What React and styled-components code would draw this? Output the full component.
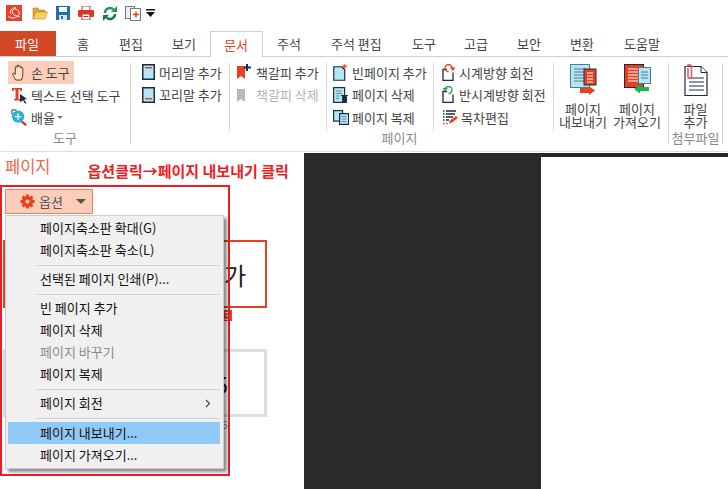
import styled, { createGlobalStyle } from "styled-components";

const GlobalStyle = createGlobalStyle`
  html, body {
    margin: 0;
    padding: 0;
    background: #fff;
    overflow: hidden;
  }
  * {
    box-sizing: border-box;
  }
  body {
    font-family: "Noto Sans CJK KR", "Noto Sans", sans-serif;
    font-size: 13px;
    color: #333;
  }
`;

const NAVY = "#1c2a45";
const SKY = "#b5e6f6";
const RED = "#e8401f";

const Window = styled.div`
  width: 728px;
  height: 489px;
  overflow: hidden;
  display: flex;
  flex-direction: column;
  background: #fff;
`;

const QuickBar = styled.div`
  height: 31px;
  display: flex;
  align-items: center;
  padding: 0 0 5px 6px;
`;

const QuickSlot = styled.div`
  width: ${(p) => p.$w}px;
  display: flex;
  align-items: center;
`;

const TabRow = styled.div`
  height: 26px;
  display: flex;
  border-bottom: 1px solid #cfcfcf;
`;

const Tab = styled.div`
  width: ${(p) => p.$w}px;
  height: 25px;
  padding-left: ${(p) => p.$pad}px;
  line-height: 25px;
  color: #444;
  white-space: nowrap;
`;

const FileTab = styled(Tab)`
  background: #d24726;
  color: #fff;
  padding-left: 15px;
`;

const ActiveTab = styled(Tab)`
  height: 26px;
  color: ${RED};
  background: #fff;
  border: 1px solid #cfcfcf;
  border-bottom: 0;
  padding-left: 13px;
`;

const Ribbon = styled.div`
  height: 95px;
  display: flex;
  padding-top: 6px;
  border-bottom: 1px solid #ddd;
`;

const Group = styled.div`
  width: ${(p) => p.$w}px;
  height: 81px;
  border-right: 1px solid #d8d8d8;
  display: flex;
  flex-direction: column;
`;

const GroupBody = styled.div`
  height: 68px;
  display: flex;
`;

const GroupLabel = styled.div`
  height: 13px;
  line-height: 13px;
  text-align: center;
  color: #888;
  white-space: nowrap;
`;

const Column = styled.div`
  width: ${(p) => p.$w}px;
  height: 68px;
  padding-left: ${(p) => p.$pad}px;
  border-right: ${(p) => (p.$open ? "0" : "1px solid #d8d8d8")};
  display: flex;
  flex-direction: column;
`;

const ToolRow = styled.div`
  height: 22.5px;
  flex: none;
  display: flex;
  align-items: center;
  gap: ${(p) => p.$gap ?? 3}px;
  padding-left: ${(p) => p.$inset ?? 0}px;
  white-space: nowrap;
  color: ${(p) => (p.$disabled ? "#b4b4b4" : "#444")};

  &:first-child {
    margin-top: -2px;
  }
`;

const HandRow = styled(ToolRow)`
  width: 66px;
  height: 23px;
  background: #fccdb9;
`;

const SmallCaret = styled.span`
  margin-left: -1px;
  border-top: 3px solid #777;
  border-left: 3px solid transparent;
  border-right: 3px solid transparent;
`;

const BigButton = styled.div`
  width: ${(p) => p.$w}px;
  display: flex;
  flex-direction: column;
  align-items: center;
  text-align: center;
  line-height: 13px;
  color: #444;
  white-space: nowrap;
`;

const BigIcon = styled.div`
  height: 39px;
  padding-top: 1px;
`;

const Workspace = styled.div`
  flex: 1;
  display: flex;
  position: relative;
  margin-top: 1px;
  min-height: 0;
`;

const Pane = styled.div`
  width: 304px;
  background: #fff;
  display: flex;
  flex-direction: column;
`;

const PaneHead = styled.div`
  height: 36px;
  display: flex;
  padding-left: 5px;
`;

const PaneTitle = styled.div`
  font-size: 16.5px;
  line-height: 26px;
  color: #e8694a;
`;

const Note = styled.div`
  margin: 7px 0 0 37px;
  line-height: 22px;
  font-size: 15px;
  font-weight: 700;
  color: #ed1c24;
  white-space: nowrap;
`;

const OptionButton = styled.div`
  width: 88px;
  height: 25px;
  margin-left: 5px;
  background: #fccdb9;
  border: 1px solid #e8825f;
  display: flex;
  align-items: center;
  padding-left: 14px;
  color: #555;
`;

const OptionLabel = styled.span`
  margin-left: 4px;
`;

const Caret = styled.span`
  margin-left: 13px;
  border-top: 5px solid #555;
  border-left: 5px solid transparent;
  border-right: 5px solid transparent;
`;

const Thumbs = styled.div`
  margin: 26px 0 0 3px;
  width: 264px;
  display: flex;
  flex-direction: column;
`;

const Thumb = styled.div`
  height: 68px;
  flex: none;
  border: ${(p) => (p.$active ? `2px solid ${RED}` : "3px solid #ddd")};
  display: flex;
  align-items: center;
  justify-content: flex-end;
  padding-right: 19px;
  font-size: 24px;
  color: #222;
`;

const WideThumb = styled(Thumb)`
  padding-right: 36px;
`;

const ThumbNumber = styled.div`
  height: 41px;
  flex: none;
  padding: 2px ${(p) => (p.$active ? 35 : 37)}px 0 0;
  text-align: right;
  font-size: 10px;
  line-height: 11px;
  color: ${(p) => (p.$active ? "#fff" : "#888")};
`;

const NumberBadge = styled.span`
  display: inline-block;
  width: 10px;
  text-align: center;
  background: ${(p) => (p.$active ? RED : "transparent")};
`;

const Canvas = styled.div`
  flex: 1;
  background: #2a2a2a;
  padding: 4px 0 0 237px;
  display: flex;
`;

const Sheet = styled.div`
  flex: 1;
  background: #fff;
`;

const Frame = styled.div`
  position: absolute;
  left: 0;
  top: 32px;
  width: 230px;
  height: 291px;
  border: 2px solid #ed1c24;
  pointer-events: none;
`;

const Menu = styled.div`
  position: absolute;
  left: 5px;
  top: 62px;
  width: 219px;
  height: 254px;
  padding: 1px 3px 0 2px;
  background: #f0f0f0;
  border: 1px solid #ccc;
  box-shadow: 3px 3px 3px rgba(0, 0, 0, 0.45);
`;

const MenuItem = styled.div`
  height: 22px;
  line-height: 22px;
  padding: 0 9px 0 32px;
  display: flex;
  justify-content: space-between;
  align-items: center;
  color: ${(p) => (p.$disabled ? "#8c8c8c" : "#111")};
  background: ${(p) => (p.$selected ? "#90c8f6" : "transparent")};
  white-space: nowrap;
`;

const MenuRule = styled.div`
  height: 1px;
  margin: 4px 0 ${(p) => (p.$tall ? 3 : 2)}px 28px;
  background: #d2d2d2;
`;

/* small drawings */

const LogoIcon = () => (
  <svg width="16" height="16" viewBox="0 0 16 16">
    <rect width="16" height="16" fill="#e8402a" />
    <path
      d="M2.500 11.500c3 2.500 9 1.500 10.500-2S10 3 7.500 4.500 6 11 13.500 11.500M4.500 9C3.500 5 7 2 10 3"
      fill="none"
      stroke="#fff"
      strokeWidth="1"
    />
  </svg>
);

const FolderIcon = () => (
  <svg width="16" height="14" viewBox="0 0 16 14">
    <path d="M1 2h5l1 2h6v2H4L1 13z" fill="#e0a72a" stroke="#b9841c" strokeWidth=".6" />
    <path d="M4 6h11.500L13 13H1z" fill="#f5cf63" stroke="#c6901f" strokeWidth=".6" />
  </svg>
);

const SaveIcon = () => (
  <svg width="14" height="14" viewBox="0 0 14 14">
    <rect width="14" height="14" fill="#1f6fa8" />
    <rect x="3" y="1" width="8" height="5" fill="#fff" />
    <rect x="3" y="9" width="8" height="5" fill="#d8e8f2" />
    <rect x="5" y="10" width="2" height="3" fill="#1f6fa8" />
  </svg>
);

const PrintIcon = () => (
  <svg width="16" height="14" viewBox="0 0 16 14">
    <rect x="4" y="0" width="8" height="5" fill="#fff" stroke="#c9342a" />
    <rect x="0" y="4" width="16" height="7" rx="1" fill="#d63a2f" />
    <rect x="4" y="8" width="8" height="6" fill="#fff" stroke="#c9342a" />
    <rect x="5.500" y="10" width="5" height="1" fill="#c9342a" />
  </svg>
);

const SyncIcon = () => (
  <svg width="14" height="15" viewBox="0 0 14 15">
    <path d="M2 7a5 5 0 0 1 8.500-3.500" fill="none" stroke="#189a4c" strokeWidth="2.400" />
    <path d="M8 6h6V0z" fill="#189a4c" />
    <path d="M12 8a5 5 0 0 1-8.500 3.500" fill="none" stroke="#0f7d3c" strokeWidth="2.400" />
    <path d="M6 9H0v6z" fill="#0f7d3c" />
  </svg>
);

const CompareIcon = () => (
  <svg width="16" height="15" viewBox="0 0 16 15">
    <rect x=".5" y=".5" width="9" height="12" fill="#eee" stroke="#777" />
    <rect x="5.500" y="2.500" width="10" height="12" fill="#fff" stroke="#777" />
    <path d="M8 8.500h6M11 5.500v6" stroke="#e8401f" strokeWidth="1.500" />
  </svg>
);

const QuickCaret = () => (
  <svg width="9" height="9" viewBox="0 0 9 9">
    <rect y="0" width="9" height="1.500" fill="#111" />
    <path d="M0 3h9L4.500 8z" fill="#111" />
  </svg>
);

const HandIcon = () => (
  <svg width="15" height="18" viewBox="0 0 16 19">
    <path
      d="M4 17C2 14 1 12 1 10.500s1.500-1 2.500.5V3.500c0-1.500 2-1.500 2 0V2c0-1.500 2-1.500 2 0v1c0-1.300 2-1.300 2 0v1.500c0-1.200 2-1.200 2 0V12c0 2-.8 3.500-1.500 5z"
      fill="#fbe3c8"
      stroke="#5b2c12"
      strokeWidth="1"
    />
  </svg>
);

const TextSelectIcon = () => (
  <svg width="18" height="17" viewBox="0 0 18 17">
    <path d="M1 1h10v3H9.500L9 2.500H7.500V12H9v1.500H3V12h1.500V2.500H3L2.500 4H1z" fill="#e8401f" />
    <path d="M9 7l7 5-3 .5L15.500 16l-1.500.8-2-3.500-3 2z" fill="#1c2a45" />
  </svg>
);

const ZoomIcon = () => (
  <svg width="17" height="17" viewBox="0 0 18 18">
    <path d="M1 6V1h5" fill="none" stroke="#1c2a45" />
    <path d="M11 13l5 4" stroke="#c9342a" strokeWidth="2.400" />
    <circle cx="7.500" cy="8" r="6.500" fill="#25b3d6" />
    <path d="M7.500 4.500v7M4 8h7" stroke="#fff" strokeWidth="1.400" />
  </svg>
);

const HeaderIcon = ({ $foot }) => (
  <svg width="13" height="16" viewBox="0 0 13 16">
    <rect x=".75" y=".75" width="11.500" height="14.500" fill={SKY} stroke={NAVY} strokeWidth="1.500" />
    <rect x="3" y={$foot ? 11 : 3} width="7" height="1.500" fill={RED} />
  </svg>
);

const BookmarkIcon = ({ $color, $mark }) => (
  <svg width="16" height="16" viewBox="0 0 16 16">
    <path d="M1 2h8v13l-4-3-4 3z" fill={$color} />
    {$mark && <path d="M11 0v7M8 3.500h7" stroke={$mark} strokeWidth="2" />}
  </svg>
);

const NewPageIcon = () => (
  <svg width="15" height="17" viewBox="0 0 15 17">
    <path d="M.75 2.750h8l3 3v10.500h-11z" fill={SKY} stroke={NAVY} strokeWidth="1.200" />
    <path d="M11.500 0v5M9 2.500h5M9.700.7l3.600 3.600M13.300.7L9.700 4.300" stroke={RED} strokeWidth=".8" />
  </svg>
);

const DeletePageIcon = () => (
  <svg width="16" height="16" viewBox="0 0 16 16">
    <rect x=".6" y=".6" width="11" height="14.800" fill={SKY} stroke={NAVY} strokeWidth="1.200" />
    <path d="M3 4h6M3 6.500h6M3 9h4M3 11.500h3" stroke="#5f8aa0" />
    <path d="M8 8.500h7M9.500 9.500h4V15.500h-4z" fill={NAVY} stroke={NAVY} />
  </svg>
);

const CopyPageIcon = () => (
  <svg width="16" height="15" viewBox="0 0 16 15">
    <rect x=".6" y=".6" width="9" height="10.500" fill={SKY} stroke={NAVY} strokeWidth="1.200" />
    <rect x="6.600" y="3.600" width="9" height="10.800" fill={SKY} stroke={NAVY} strokeWidth="1.200" />
    <path d="M8.500 6.500h5M8.500 9h5M8.500 11.500h5" stroke="#5f8aa0" />
  </svg>
);

const RotateIcon = ({ $color, $back }) => (
  <svg width="14" height="17" viewBox="0 0 14 17">
    <path d="M5 5.500H1v11h10v-8" fill="none" stroke={NAVY} strokeWidth="1.300" />
    {$back ? (
      <g>
        <path d="M3 4a3.500 3.500 0 1 1 3.500 3.500" fill="none" stroke={$color} strokeWidth="1.300" />
        <path d="M0 4h5.500L3 1z" fill={$color} transform="rotate(180 3 3)" />
      </g>
    ) : (
      <g>
        <path d="M10 4a3.500 3.500 0 1 0-3.500 3.500" fill="none" stroke={$color} strokeWidth="1.300" />
        <path d="M8 3.500h5.500L10.700 7z" fill={$color} />
      </g>
    )}
  </svg>
);

const TocIcon = () => (
  <svg width="16" height="15" viewBox="0 0 16 15">
    <path d="M1 1h1.500M4 1h10M1 4h1.500M4 4h9M1 7h1.500M4 7h7M1 10h1.500M4 10h3" stroke={NAVY} strokeWidth="1.500" />
    <path d="M1 13.500h1.500M4 13.500h1.500" stroke={RED} strokeWidth="1.500" />
    <path d="M7 13.500l1-3 6-4.500 2 2-6 4.500z" fill={RED} />
  </svg>
);

const ExportIcon = () => (
  <svg width="27" height="31" viewBox="0 0 27 31">
    <rect x=".5" y=".5" width="19" height="23" fill={SKY} stroke="#4d7b90" />
    <path d="M4 5h12M4 8h12M4 11h12M4 14h12M4 17h12" stroke="#4d7b90" />
    <rect x="14" y="5" width="12" height="16" fill={RED} stroke={NAVY} />
    <path d="M17 9h6M17 12h6M17 15h6M17 18h6" stroke="#fff" />
    <path d="M10 24h9v-2l6 4.500-6 4.500v-2h-9z" fill={RED} />
  </svg>
);

const ImportIcon = () => (
  <svg width="27" height="31" viewBox="0 0 27 31">
    <rect x=".5" y=".5" width="19" height="23" fill={RED} stroke={NAVY} />
    <path d="M4 5h10M4 8h10M4 11h10M4 14h10M4 17h10" stroke="#fff" />
    <rect x="14.500" y="3.500" width="12" height="16" fill={SKY} stroke="#4d7b90" />
    <path d="M17 8h7M17 11h7M17 14h7" stroke="#4d7b90" />
    <path d="M25 23h-9v-2.500L10 25l6 4.500V27h9z" fill="#12b94a" />
  </svg>
);

const AttachIcon = () => (
  <svg width="24" height="32" viewBox="0 0 24 32">
    <path d="M1 2.500h16l6 6v23H1z" fill="#fff" stroke={NAVY} strokeWidth="1.200" />
    <path d="M17 2.500v6h6" fill="#fff" stroke={NAVY} />
    <path d="M5 14h15M5 18h15M5 22h15M5 26h15" stroke={NAVY} />
    <path d="M4 4v9c0 2 3.500 2 3.500 0V3C7.500 0 3 0 3 3" fill="none" stroke="#ea5a5a" strokeWidth="1.500" />
  </svg>
);

const GearIcon = () => (
  <svg width="15" height="15" viewBox="0 0 15 15">
    <circle cx="7.500" cy="7.500" r="3.800" fill="none" stroke="#e8401f" strokeWidth="3.400" />
    <path
      d="M7.500 0.500v3M7.500 11.500v3M0.500 7.500h3M11.500 7.500h3M2.500 2.500l2 2M10.500 10.500l2 2M12.500 2.500l-2 2M4.500 10.500l-2 2"
      stroke="#e8401f"
      strokeWidth="2.800"
    />
  </svg>
);

const ChevronIcon = () => (
  <svg width="6" height="9" viewBox="0 0 6 9">
    <path d="M1 1l3.500 3.500L1 8" fill="none" stroke="#444" strokeWidth="1.100" />
  </svg>
);

const tabs = [
  { name: "홈", w: 54, pad: 21 },
  { name: "편집", w: 50, pad: 9 },
  { name: "보기", w: 50, pad: 12 },
];

const moreTabs = [
  { name: "주석", w: 57, pad: 14 },
  { name: "주석 편집", w: 80, pad: 11 },
  { name: "도구", w: 52, pad: 12 },
  { name: "고급", w: 53, pad: 12 },
  { name: "보안", w: 53, pad: 12 },
  { name: "변환", w: 54, pad: 12 },
  { name: "도움말", w: 58, pad: 12 },
];

export default function App() {
  return (
    <Window>
      <GlobalStyle />
      <QuickBar>
        <QuickSlot $w={26}><LogoIcon /></QuickSlot>
        <QuickSlot $w={24}><FolderIcon /></QuickSlot>
        <QuickSlot $w={22}><SaveIcon /></QuickSlot>
        <QuickSlot $w={25}><PrintIcon /></QuickSlot>
        <QuickSlot $w={22}><SyncIcon /></QuickSlot>
        <QuickSlot $w={21}><CompareIcon /></QuickSlot>
        <QuickSlot $w={9}><QuickCaret /></QuickSlot>
      </QuickBar>

      <TabRow>
        <FileTab $w={56}>파일</FileTab>
        {tabs.map((t) => (
          <Tab key={t.name} $w={t.w} $pad={t.pad}>{t.name}</Tab>
        ))}
        <ActiveTab $w={53}>문서</ActiveTab>
        {moreTabs.map((t) => (
          <Tab key={t.name} $w={t.w} $pad={t.pad}>{t.name}</Tab>
        ))}
      </TabRow>

      <Ribbon>
        <Group $w={131}>
          <GroupBody>
            <Column $w={130} $pad={8} $open>
              <HandRow $inset={4} $gap={4}><HandIcon /><span>손 도구</span></HandRow>
              <ToolRow $inset={3} $gap={2}><TextSelectIcon /><span>텍스트 선택 도구</span></ToolRow>
              <ToolRow $inset={3} $gap={3}><ZoomIcon /><span>배율</span><SmallCaret /></ToolRow>
            </Column>
          </GroupBody>
          <GroupLabel>도구</GroupLabel>
        </Group>

        <Group $w={538}>
          <GroupBody>
            <Column $w={99} $pad={11}>
              <ToolRow $gap={4}><HeaderIcon /><span>머리말 추가</span></ToolRow>
              <ToolRow $gap={4}><HeaderIcon $foot /><span>꼬리말 추가</span></ToolRow>
            </Column>
            <Column $w={97} $pad={6}>
              <ToolRow $gap={4}><BookmarkIcon $color={RED} $mark={NAVY} /><span>책갈피 추가</span></ToolRow>
              <ToolRow $gap={4} $disabled><BookmarkIcon $color="#b9b9b9" /><span>책갈피 삭제</span></ToolRow>
            </Column>
            <Column $w={107} $pad={6}>
              <ToolRow $gap={4}><NewPageIcon /><span>빈페이지 추가</span></ToolRow>
              <ToolRow $gap={3}><DeletePageIcon /><span>페이지 삭제</span></ToolRow>
              <ToolRow $gap={3}><CopyPageIcon /><span>페이지 복제</span></ToolRow>
            </Column>
            <Column $w={120} $pad={8}>
              <ToolRow><RotateIcon $color={RED} /><span>시계방향 회전</span></ToolRow>
              <ToolRow><RotateIcon $color="#17a83f" $back /><span>반시계방향 회전</span></ToolRow>
              <ToolRow><TocIcon /><span>목차편집</span></ToolRow>
            </Column>
            <BigButton $w={58}>
              <BigIcon><ExportIcon /></BigIcon>
              <span>페이지</span>
              <span>내보내기</span>
            </BigButton>
            <BigButton $w={50}>
              <BigIcon><ImportIcon /></BigIcon>
              <span>페이지</span>
              <span>가져오기</span>
            </BigButton>
          </GroupBody>
          <GroupLabel>페이지</GroupLabel>
        </Group>

        <Group $w={54}>
          <GroupBody>
            <BigButton $w={53}>
              <BigIcon><AttachIcon /></BigIcon>
              <span>파일</span>
              <span>추가</span>
            </BigButton>
          </GroupBody>
          <GroupLabel>첨부파일</GroupLabel>
        </Group>
      </Ribbon>

      <Workspace>
        <Pane>
          <PaneHead>
            <PaneTitle>페이지</PaneTitle>
            <Note>옵션클릭→페이지 내보내기 클릭</Note>
          </PaneHead>
          <OptionButton>
            <GearIcon />
            <OptionLabel>옵션</OptionLabel>
            <Caret />
          </OptionButton>
          <Thumbs>
            <Thumb $active>가</Thumb>
            <ThumbNumber $active><NumberBadge $active>3</NumberBadge></ThumbNumber>
            <WideThumb>5</WideThumb>
            <ThumbNumber><NumberBadge>6</NumberBadge></ThumbNumber>
          </Thumbs>
        </Pane>
        <Canvas>
          <Sheet />
        </Canvas>

        <Frame />
        <Menu>
          <MenuItem>페이지축소판 확대(G)</MenuItem>
          <MenuItem>페이지축소판 축소(L)</MenuItem>
          <MenuRule />
          <MenuItem>선택된 페이지 인쇄(P)...</MenuItem>
          <MenuRule />
          <MenuItem>빈 페이지 추가</MenuItem>
          <MenuItem>페이지 삭제</MenuItem>
          <MenuItem $disabled>페이지 바꾸기</MenuItem>
          <MenuItem>페이지 복제</MenuItem>
          <MenuRule />
          <MenuItem>페이지 회전<ChevronIcon /></MenuItem>
          <MenuRule $tall />
          <MenuItem $selected>페이지 내보내기...</MenuItem>
          <MenuItem>페이지 가져오기...</MenuItem>
        </Menu>
      </Workspace>
    </Window>
  );
}
